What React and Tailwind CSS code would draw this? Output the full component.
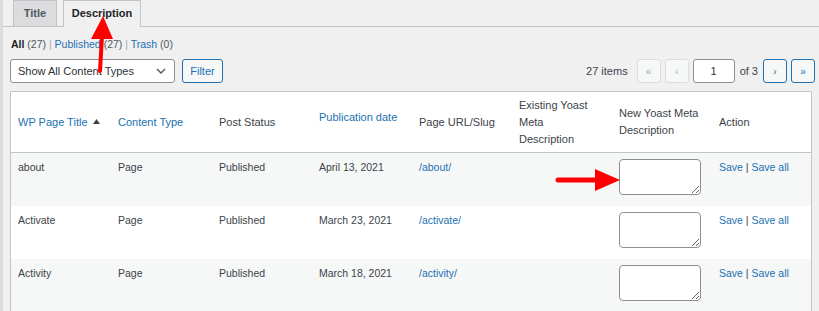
import React from 'react';

const rows = [
  { title: 'about', type: 'Page', status: 'Published', date: 'April 13, 2021', slug: '/about/' },
  { title: 'Activate', type: 'Page', status: 'Published', date: 'March 23, 2021', slug: '/activate/' },
  { title: 'Activity', type: 'Page', status: 'Published', date: 'March 18, 2021', slug: '/activity/' },
];

function PageButton({ children, active }) {
  return (
    <span
      className={`flex h-[24px] w-[24px] items-center justify-center rounded-[3px] border bg-[#f6f7f7] text-[10px] ${
        active ? 'border-[#2271b1] text-[#2271b1]' : 'border-[#dcdcde] text-[#a7aaad]'
      }`}
    >
      {children}
    </span>
  );
}

export default function App() {
  return (
    <div className="relative h-[311px] w-[819px] overflow-hidden border-l-[3px] border-[#dcdcde] bg-[#f0f0f1] font-['Liberation_Sans',Arial,sans-serif] text-[#3c434a]">
      {/* Tabs */}
      <div className="flex h-[27px] items-end gap-[6px] border-b border-[#c3c4c7] pl-[10px]">
        <div className="flex h-[26px] w-[44px] items-center justify-center border border-b-0 border-[#c3c4c7] bg-[#dcdcde] text-[11px] font-bold text-[#50575e]">
          Title
        </div>
        <div className="-mb-px flex h-[27px] w-[78px] items-center justify-center border border-b-0 border-[#c3c4c7] bg-[#f0f0f1] pb-px text-[11px] font-bold text-[#1d2327]">
          Description
        </div>
      </div>

      {/* Status links */}
      <div className="mt-[10px] pl-[8px] text-[10.5px] leading-[15px] text-[#50575e]">
        <span className="font-bold text-[#1d2327]">All</span> (27){' '}
        <span className="text-[#a7aaad]">|</span>{' '}
        <span className="text-[#2271b1]">Published</span> (27){' '}
        <span className="text-[#a7aaad]">|</span>{' '}
        <span className="text-[#2271b1]">Trash</span> (0)
      </div>

      {/* Table nav */}
      <div className="mt-[7px] flex h-[24px] items-center justify-between pl-[7px] pr-[4px]">
        <div className="flex items-center gap-[7px]">
          <div className="flex h-[24px] w-[165px] items-center justify-between rounded-[3px] border border-[#8c8f94] bg-white pl-[7px] pr-[8px] text-[11px] text-[#2c3338]">
            <span>Show All Content Types</span>
            <svg width="10" height="6" viewBox="0 0 10 6" fill="none">
              <path d="M1 1l4 4 4-4" stroke="#50575e" strokeWidth="1.4" />
            </svg>
          </div>
          <div className="flex h-[24px] w-[41px] items-center justify-center rounded-[3px] border border-[#2271b1] bg-[#f6f7f7] text-[11px] text-[#2271b1]">
            Filter
          </div>
        </div>
        <div className="flex items-center gap-[4px] text-[11px] text-[#3c434a]">
          <span className="mr-[5px]">27 items</span>
          <PageButton>«</PageButton>
          <PageButton>‹</PageButton>
          <span className="flex h-[24px] w-[42px] items-center justify-center rounded-[3px] border border-[#8c8f94] bg-white text-[11px] text-[#2c3338]">
            1
          </span>
          <span className="mx-[1px]">of 3</span>
          <PageButton active>›</PageButton>
          <PageButton active>»</PageButton>
        </div>
      </div>

      {/* Table */}
      <div className="ml-[7px] mt-[8px] w-[802px] border border-[#c3c4c7] bg-white">
        <div className="grid h-[61px] grid-cols-[100px_100px_100px_100px_100px_100px_100px_100px] border-b border-[#c3c4c7] text-[11px] leading-[17px]">
          <div className="flex items-center pl-[7px] text-[#2271b1]">
            WP Page Title
            <svg className="ml-[5px] mb-[2px]" width="7" height="5" viewBox="0 0 7 5">
              <path d="M3.5 0L7 5H0z" fill="#3c434a" />
            </svg>
          </div>
          <div className="flex items-center pl-[7px] text-[#2271b1]">Content Type</div>
          <div className="flex items-center pl-[8px]">Post Status</div>
          <div className="flex items-center pb-[10px] pl-[8px] text-[#2271b1]">Publication date</div>
          <div className="flex items-center pl-[8px]">Page URL/Slug</div>
          <div className="flex items-center pl-[8px] pr-[14px]">Existing Yoast Meta Description</div>
          <div className="flex items-center pl-[8px] pr-[4px]">New Yoast Meta Description</div>
          <div className="flex items-center pl-[8px]">Action</div>
        </div>
        {rows.map((r, i) => (
          <div
            key={r.title}
            className={`grid h-[53px] grid-cols-[100px_100px_100px_100px_100px_100px_100px_100px] text-[10.5px] leading-[15px] ${
              i % 2 === 0 ? 'bg-[#f6f7f7]' : 'bg-white'
            }`}
          >
            <div className="pl-[7px] pt-[7px]">{r.title}</div>
            <div className="pl-[7px] pt-[7px]">{r.type}</div>
            <div className="pl-[8px] pt-[7px]">{r.status}</div>
            <div className="pl-[8px] pt-[7px]">{r.date}</div>
            <div className="pl-[8px] pt-[7px] text-[#2271b1]">{r.slug}</div>
            <div />
            <div className="pl-[8px] pt-[6px]">
              <textarea
                readOnly
                className="block h-[36px] w-[82px] rounded-[4px] border border-[#8c8f94] bg-white outline-none"
              />
            </div>
            <div className="pl-[8px] pt-[7px] text-[#2271b1]">
              Save <span className="text-[#3c434a]">|</span> Save all
            </div>
          </div>
        ))}
      </div>

      {/* Annotation arrows */}
      <svg className="pointer-events-none absolute top-0 left-[-3px]" width="819" height="311" viewBox="0 0 819 311">
        <line x1="100" y1="71" x2="102" y2="36" stroke="#f00" strokeWidth="4" strokeLinecap="round" />
        <polygon points="103,16 91,39 113,39" fill="#f00" />
        <line x1="558" y1="180" x2="598" y2="180" stroke="#f00" strokeWidth="5" strokeLinecap="round" />
        <polygon points="620,180 595,169 595,191" fill="#f00" />
      </svg>
    </div>
  );
}
